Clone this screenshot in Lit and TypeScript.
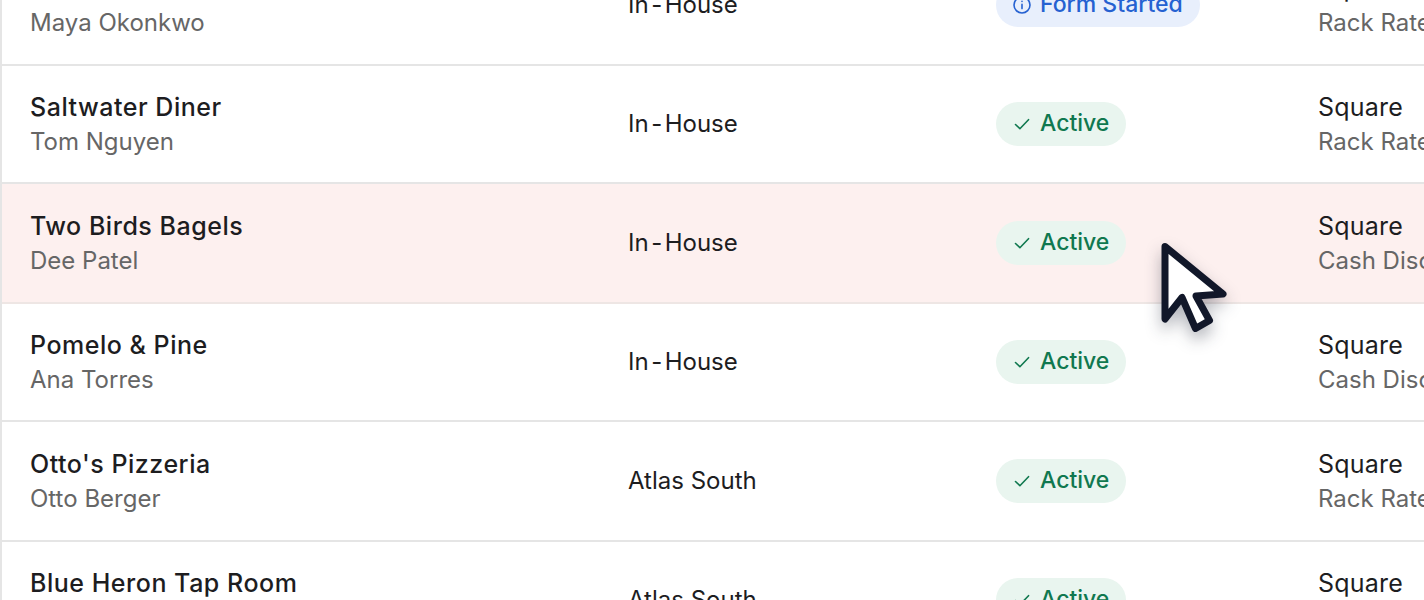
import { LitElement, html, css, svg } from "lit";
import { customElement } from "lit/decorators.js";

type Row = { name: string; owner: string; team: string; status: "active" | "form"; pos: string; rate: string; hot?: boolean };

const rows: Row[] = [
  { name: "Harbor Coffee", owner: "Maya Okonkwo", team: "In-House", status: "form", pos: "Square", rate: "Rack Rate" },
  { name: "Saltwater Diner", owner: "Tom Nguyen", team: "In-House", status: "active", pos: "Square", rate: "Rack Rate" },
  { name: "Two Birds Bagels", owner: "Dee Patel", team: "In-House", status: "active", pos: "Square", rate: "Cash Discount", hot: true },
  { name: "Pomelo & Pine", owner: "Ana Torres", team: "In-House", status: "active", pos: "Square", rate: "Cash Discount" },
  { name: "Otto's Pizzeria", owner: "Otto Berger", team: "Atlas South", status: "active", pos: "Square", rate: "Rack Rate" },
  { name: "Blue Heron Tap Room", owner: "Lena Walsh", team: "Atlas South", status: "active", pos: "Square", rate: "Rack Rate" },
];

@customElement("app-root")
export class AppRoot extends LitElement {
  static styles = css`
    :host {
      display: block;
      position: relative;
      width: 1424px;
      height: 600px;
      overflow: hidden;
      background: #fff;
      font-family: Inter, "Liberation Sans", sans-serif;
    }
    .table {
      margin-top: -54px;
      border-left: 2px solid #e5e5e5;
    }
    .row {
      display: grid;
      grid-template-columns: 598px 368px 322px 1fr;
      align-items: center;
      padding-left: 28px;
      border-bottom: 2px solid #e5e5e5;
    }
    .row.tall { height: 118px; }
    .row.short { height: 116px; }
    .row.hot { background: #fdf0ef; border-bottom-color: #eee6e4; }
    .stack { display: flex; flex-direction: column; gap: 3.5px; padding-top: 1px; white-space: nowrap; min-width: 0; }
    .name { font-size: 25px; line-height: 31px; font-weight: 500; letter-spacing: 0.52px; color: #1d1d1f; }
    .pos { font-size: 25px; line-height: 31px; font-weight: 400; letter-spacing: 0.2px; color: #1d1d1f; }
    .sub { font-size: 24px; line-height: 31px; color: #666; font-weight: 400; }
    .team { font-size: 24px; line-height: 31px; color: #1d1d1f; padding-bottom: 1px; }
    .hy { margin: 0 2.5px; }
    .badge {
      display: inline-flex;
      align-items: center;
      gap: 8px;
      justify-self: start;
      height: 44px;
      padding: 0 17px 0 16px;
      border-radius: 22px;
      font-size: 23px;
      font-weight: 500;
      white-space: nowrap;
    }
    .badge svg { width: 20px; height: 20px; flex: none; }
    .label { padding-bottom: 2px; }
    .active { background: #e9f5ef; color: #10784f; }
    .form { background: #e8effc; color: #2561d1; }
    .cursor {
      position: absolute;
      left: 1150px;
      top: 232px;
      width: 90px;
      height: 112px;
      filter: drop-shadow(0 8px 8px rgba(20, 25, 45, 0.32));
    }
  `;

  private check() {
    return html`<svg viewBox="0 0 20 20" fill="none" stroke="currentColor" stroke-width="1.6" stroke-linecap="round" stroke-linejoin="round">
      <path d="M3.5 10.5l4.4 4.2 8.6-9" />
    </svg>`;
  }

  private info() {
    return html`<svg viewBox="0 0 20 20" fill="none" stroke="currentColor" stroke-width="1.6" stroke-linecap="round">
      <circle cx="10" cy="10" r="8" />
      <path d="M10 9.4v4.2M10 6.4v.1" />
    </svg>`;
  }

  private team(t: string) {
    const parts = t.split("-");
    return parts.length === 2 ? html`${parts[0]}<span class="hy">-</span>${parts[1]}` : t;
  }

  render() {
    return html`
      <div class="table">
        ${rows.map(
          (r, i) => html`
            <div class="row ${i % 2 === 0 ? "tall" : "short"} ${r.hot ? "hot" : ""}">
              <div class="stack">
                <span class="name">${r.name}</span>
                <span class="sub">${r.owner}</span>
              </div>
              <span class="team">${this.team(r.team)}</span>
              <span class="badge ${r.status}">
                ${r.status === "active" ? this.check() : this.info()}
                <span class="label">${r.status === "active" ? "Active" : "Form Started"}</span>
              </span>
              <div class="stack">
                <span class="pos">${r.pos}</span>
                <span class="sub">${r.rate}</span>
              </div>
            </div>
          `
        )}
      </div>
      <svg class="cursor" viewBox="0 0 90 112">
        ${svg`<path d="M15 14.5 L73 62 L46 64 L59.5 88.5 L45.5 96.5 L32 65.5 L15 87 Z" fill="#fff" stroke="#111729" stroke-width="7" stroke-linejoin="round" />`}
      </svg>
    `;
  }
}
